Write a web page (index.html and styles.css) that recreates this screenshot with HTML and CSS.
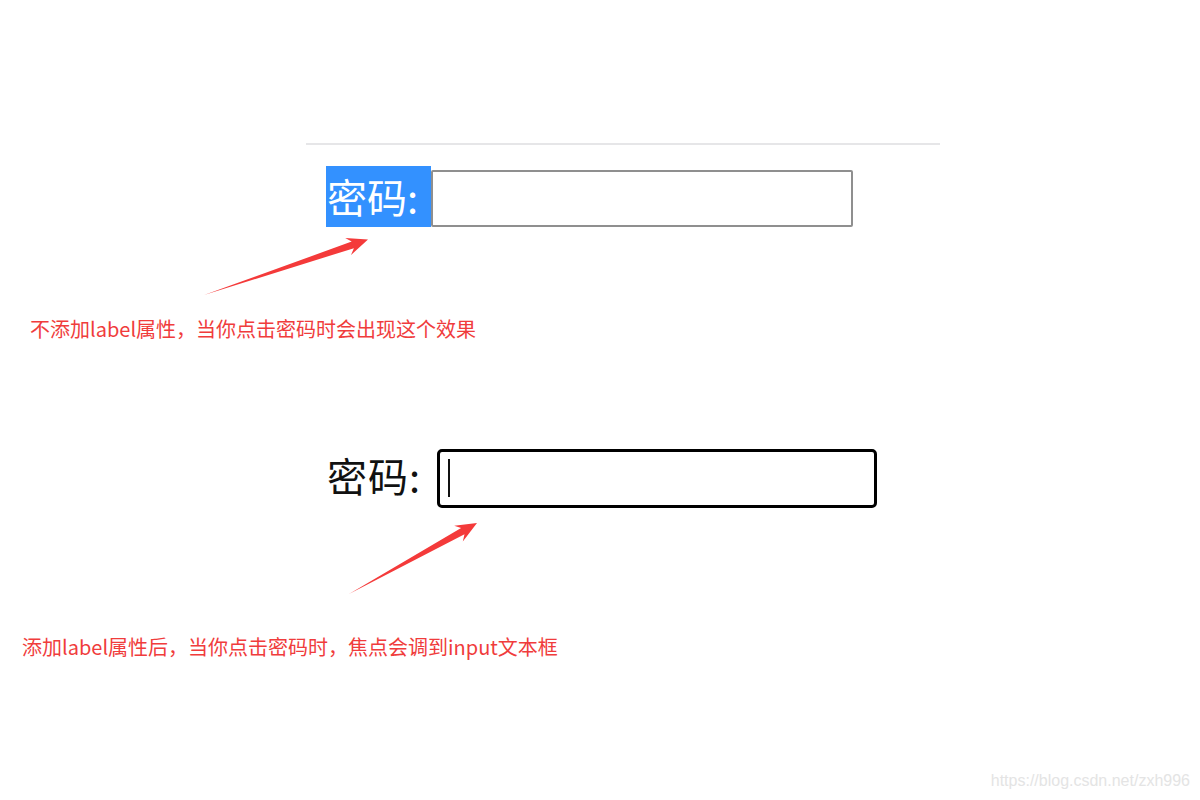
FILE: index.html
```html
<!DOCTYPE html>
<html lang="zh-CN">
<head>
<meta charset="utf-8">
<title>label demo</title>
<link rel="stylesheet" href="styles.css">
</head>
<body>
<div class="page">
  <div class="rule"></div>

  <div class="row row-selected">
    <span class="label label-selected">密码:</span>
    <div class="field field-plain"></div>
  </div>

  <p class="note note-first">不添加label属性，当你点击密码时会出现这个效果</p>

  <div class="row row-focused">
    <label class="label label-plain" for="pwd">密码:</label>
    <div class="field field-focus" id="pwd"><span class="caret"></span></div>
  </div>

  <p class="note note-second">添加label属性后，当你点击密码时，焦点会调到input文本框</p>

  <svg class="arrows" width="1200" height="800" viewBox="0 0 1200 800" aria-hidden="true">
    <polygon fill="#f43a3a" points="204,295 351.7,241.6 345.2,238 368,239.5 351,255 353.9,248.2"/>
    <polygon fill="#f43a3a" points="349,594 461.1,528.1 454.2,525.7 477,523 462.8,541.5 464.5,534.3"/>
  </svg>

  <div class="watermark">https://blog.csdn.net/zxh996</div>
</div>
</body>
</html>
```

FILE: styles.css
```css
html, body {
  margin: 0;
  padding: 0;
  background: #ffffff;
}

.page {
  position: relative;
  width: 1200px;
  height: 800px;
  overflow: hidden;
  font-family: "Noto Sans CJK SC", "Noto Sans", sans-serif;
}

.rule {
  margin: 143px 0 0 306px;
  width: 634px;
  height: 2px;
  background: #e6e6e8;
}

.row {
  display: flex;
}

.row-selected {
  margin: 21px 0 0 326px;
  align-items: flex-end;
}

.label {
  font-size: 40px;
  line-height: 61px;
  white-space: nowrap;
}

.label-selected {
  display: block;
  width: 105px;
  height: 61px;
  padding-left: 1px;
  box-sizing: border-box;
  background: #3391ff;
  color: #ffffff;
}

.field {
  box-sizing: border-box;
  background: #ffffff;
}

.field-plain {
  width: 422px;
  height: 57px;
  border: 2px solid #8f8f8f;
  border-radius: 2px;
}

.note {
  margin: 0;
  font-size: 20px;
  line-height: 28px;
  color: #f03c3c;
  white-space: nowrap;
}

.note-first {
  margin: 88px 0 0 30px;
}

.row-focused {
  margin: 106px 0 0 327px;
  align-items: center;
  gap: 16px;
}

.label-plain {
  color: #111111;
  line-height: 50px;
  margin-top: -7px;
  letter-spacing: 1px;
}

.field-focus {
  width: 440px;
  height: 59px;
  border: 3px solid #000000;
  border-radius: 5px;
  padding: 7px 0 0 8px;
}

.caret {
  display: block;
  width: 2px;
  height: 38px;
  background: #111111;
}

.note-second {
  margin: 125px 0 0 22px;
}

.arrows {
  position: absolute;
  left: 0;
  top: 0;
  pointer-events: none;
}

.watermark {
  position: absolute;
  right: 10px;
  bottom: 9px;
  font-family: "Liberation Sans", Arial, sans-serif;
  font-size: 16px;
  line-height: 20px;
  color: #e4e4e4;
}
```
